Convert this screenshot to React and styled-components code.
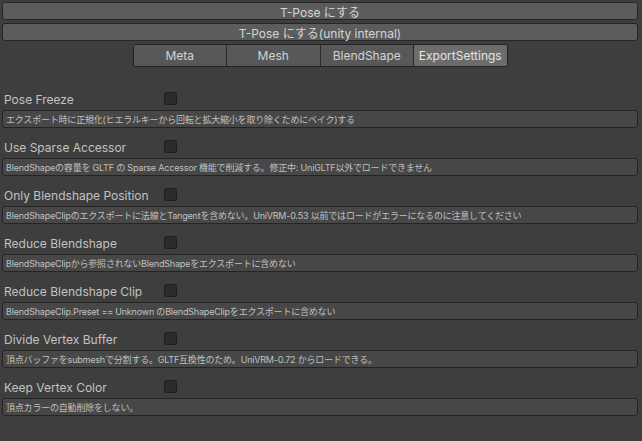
import React from "react";
import styled, { createGlobalStyle } from "styled-components";

const Global = createGlobalStyle`
  html, body { margin: 0; padding: 0; background: #3e3e3e; }
  body { font-family: Inter, "Noto Sans CJK JP", sans-serif; }
`;

const Page = styled.div`
  width: 642px;
  height: 441px;
  box-sizing: border-box;
  padding: 2px 4px 0 2px;
  background: #3e3e3e;
  display: flex;
  flex-direction: column;
`;

const WideButton = styled.div`
  height: 18px;
  box-sizing: border-box;
  margin-bottom: ${(p) => p.$mb || 0}px;
  background: #5c5c5c;
  border: 1px solid #262626;
  border-radius: 3px;
  color: #d4d4d4;
  font-size: 12px;
  display: flex;
  align-items: center;
  justify-content: center;
`;

const Tabs = styled.div`
  align-self: center;
  margin-top: 3px;
  width: 375px;
  height: 23px;
  display: flex;
  box-sizing: border-box;
  border: 1px solid #232323;
  border-radius: 3px;
  overflow: hidden;
`;

const Tab = styled.div`
  flex: 1;
  display: flex;
  align-items: center;
  justify-content: center;
  font-size: 12px;
  color: ${(p) => (p.$active ? "#e4e4e4" : "#d2d2d2")};
  background: ${(p) => (p.$active ? "#6c6c6c" : "#585858")};
  border-left: ${(p) => (p.$first ? "none" : "1px solid #2a2a2a")};
`;

const Entry = styled.div`
  margin-top: ${(p) => (p.$first ? 25 : 12)}px;
  display: flex;
  flex-direction: column;
`;

const Row = styled.div`
  height: 14px;
  display: flex;
  align-items: flex-start;
`;

const Label = styled.div`
  width: 162px;
  padding-left: 2px;
  box-sizing: border-box;
  color: #c2c2c2;
  font-size: 12px;
  line-height: 14px;
  margin-top: 1px;
  white-space: nowrap;
`;

const Check = styled.div`
  width: 13px;
  height: 13px;
  box-sizing: border-box;
  background: #2b2b2b;
  border: 1px solid #1e1e1e;
  border-radius: 2px;
`;

const Help = styled.div`
  margin-top: 4px;
  height: 18px;
  box-sizing: border-box;
  background: #474747;
  border: 1px solid #242424;
  border-radius: 3px;
  padding-left: 3px;
  display: flex;
  align-items: center;
  color: #c0c0c0;
  font-size: 9px;
  letter-spacing: -0.2px;
  white-space: nowrap;
  overflow: hidden;
`;

const items = [
  ["Pose Freeze", "エクスポート時に正規化(ヒエラルキーから回転と拡大縮小を取り除くためにベイク)する"],
  ["Use Sparse Accessor", "BlendShapeの容量を GLTF の Sparse Accessor 機能で削減する。修正中: UniGLTF以外でロードできません"],
  ["Only Blendshape Position", "BlendShapeClipのエクスポートに法線とTangentを含めない。UniVRM-0.53 以前ではロードがエラーになるのに注意してください"],
  ["Reduce Blendshape", "BlendShapeClipから参照されないBlendShapeをエクスポートに含めない"],
  ["Reduce Blendshape Clip", "BlendShapeClip.Preset == Unknown のBlendShapeClipをエクスポートに含めない"],
  ["Divide Vertex Buffer", "頂点バッファをsubmeshで分割する。GLTF互換性のため。UniVRM-0.72 からロードできる。"],
  ["Keep Vertex Color", "頂点カラーの自動削除をしない。"],
];

export default function App() {
  return (
    <>
      <Global />
      <Page>
        <WideButton $mb={3}>T-Pose にする</WideButton>
        <WideButton>T-Pose にする(unity internal)</WideButton>
        <Tabs>
          <Tab $first>Meta</Tab>
          <Tab>Mesh</Tab>
          <Tab>BlendShape</Tab>
          <Tab $active>ExportSettings</Tab>
        </Tabs>
        {items.map(([label, help], i) => (
          <Entry key={label} $first={i === 0}>
            <Row>
              <Label>{label}</Label>
              <Check />
            </Row>
            <Help>{help}</Help>
          </Entry>
        ))}
      </Page>
    </>
  );
}
